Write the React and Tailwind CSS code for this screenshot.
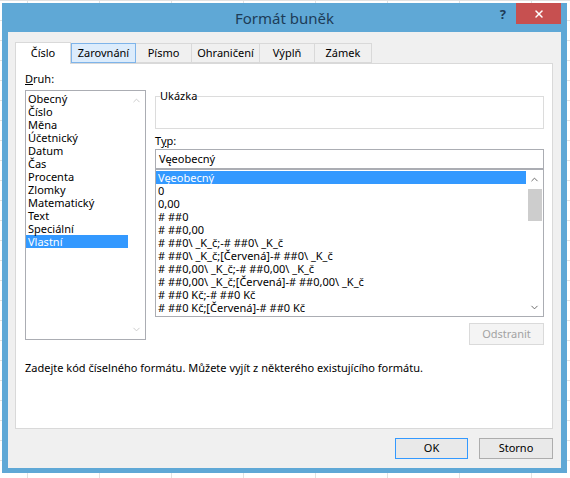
import { ChevronUp, ChevronDown, X } from "lucide-react";

const druhy = [
  "Obecný",
  "Číslo",
  "Měna",
  "Účetnický",
  "Datum",
  "Čas",
  "Procenta",
  "Zlomky",
  "Matematický",
  "Text",
  "Speciální",
  "Vlastní",
];

const typy = [
  "Vęeobecný",
  "0",
  "0,00",
  "# ##0",
  "# ##0,00",
  "# ##0\\ _K_č;-# ##0\\ _K_č",
  "# ##0\\ _K_č;[Červená]-# ##0\\ _K_č",
  "# ##0,00\\ _K_č;-# ##0,00\\ _K_č",
  "# ##0,00\\ _K_č;[Červená]-# ##0,00\\ _K_č",
  "# ##0 Kč;-# ##0 Kč",
  "# ##0 Kč;[Červená]-# ##0 Kč",
];

const tabs = [
  { label: "Zarovnání", w: "w-[65px]", hover: true },
  { label: "Písmo", w: "w-[56px]" },
  { label: "Ohraničení", w: "w-[68px]" },
  { label: "Výplň", w: "w-[55px]" },
  { label: "Zámek", w: "w-[57px]" },
];

export default function App() {
  return (
    <div
      className="w-[570px] h-[478px] overflow-hidden bg-white pt-[3px] pl-[2px] bg-[linear-gradient(to_right,#e2e2e2_1px,transparent_1px),linear-gradient(to_bottom,#e2e2e2_1px,transparent_1px)] bg-[length:72px_20px] bg-[position:27px_0px]"
      style={{ fontFamily: '"Noto Sans", "Open Sans", sans-serif' }}
    >
      <div className="w-[565px] h-[470px] bg-[#5fa8d6] flex flex-col px-[6px] pb-[5px]">
        {/* title bar */}
        <div className="h-[29px] relative flex items-center justify-center">
          <span className="text-[15px] text-[#1d3c58] pt-[2px]">Formát buněk</span>
          <div className="absolute top-0 right-0 flex items-start">
            <span className="text-[13px] font-bold text-[#1d3c58] mr-[10px] mt-[2px]">?</span>
            <div className="w-[45px] h-[21px] bg-[#c75050] flex items-center justify-center">
              <X size={12} strokeWidth={3} color="#ffffff" />
            </div>
          </div>
        </div>

        {/* client */}
        <div className="flex-1 bg-[#f0f0f0] pt-[9px] px-[7px] text-[11px] text-black">
          <div className="flex items-end h-[22px]">
            <div className="relative z-10 w-[56px] h-[22px] -mb-[1px] bg-white border border-b-0 border-[#d9d9d9] flex items-center justify-center">
              Číslo
            </div>
            {tabs.map((t) => (
              <div
                key={t.label}
                className={
                  t.hover
                    ? `${t.w} h-[20px] border border-[#7eb4ea] bg-[#dcecfc] flex items-center justify-center`
                    : `${t.w} h-[20px] border border-l-0 border-[#d9d9d9] bg-[#f0f0f0] flex items-center justify-center`
                }
              >
                {t.label}
              </div>
            ))}
          </div>

          {/* panel */}
          <div className="w-[538px] h-[366px] border border-[#d9d9d9] bg-white pt-[8px] pl-[9px]">
            <div className="flex">
              <div className="w-[121px]">
                <div className="h-[18px] leading-[14px]">
                  <span className="underline">D</span>ruh:
                </div>
                <div className="h-[250px] border border-[#abadb3] flex">
                  <div className="flex-1 pt-[1px]">
                    {druhy.map((d, i) => (
                      <div
                        key={d}
                        className={
                          i === druhy.length - 1
                            ? "h-[13px] leading-[13px] pl-[2px] bg-[#3399ff] text-white"
                            : "h-[13px] leading-[13px] pl-[2px]"
                        }
                      >
                        {d}
                      </div>
                    ))}
                  </div>
                  <div className="w-[17px] flex flex-col justify-between items-center py-[4px]">
                    <ChevronUp size={11} strokeWidth={2} color="#c8c8c8" />
                    <ChevronDown size={11} strokeWidth={2} color="#c8c8c8" />
                  </div>
                </div>
              </div>

              <div className="w-[389px] ml-[9px] flex flex-col">
                <div className="relative mt-[24px] h-[33px] border border-[#dcdcdc]">
                  <span className="absolute -top-[8px] left-[4px] bg-white leading-[14px]">Ukázka</span>
                </div>
                <div className="mt-[5px] h-[15px] leading-[14px]">
                  T<span className="underline">y</span>p:
                </div>
                <div className="h-[20px] border border-[#abadb3] pl-[3px] leading-[18px]">Vęeobecný</div>
                <div className="h-[148px] border border-[#abadb3] flex">
                  <div className="flex-1 pt-[1px]">
                    {typy.map((t, i) => (
                      <div
                        key={t}
                        className={
                          i === 0
                            ? "h-[13px] leading-[13px] pl-[2px] bg-[#3399ff] text-white whitespace-pre"
                            : "h-[13px] leading-[13px] pl-[2px] whitespace-pre"
                        }
                      >
                        {t}
                      </div>
                    ))}
                  </div>
                  <div className="w-[17px] flex flex-col items-center pt-[4px] pb-[3px]">
                    <ChevronUp size={11} strokeWidth={2} color="#606060" />
                    <div className="w-[14px] h-[32px] bg-[#cdcdcd] mt-[4px]" />
                    <div className="flex-1" />
                    <ChevronDown size={11} strokeWidth={2} color="#606060" />
                  </div>
                </div>
                <div className="self-end mt-[6px] w-[75px] h-[22px] border border-[#dadada] bg-[#f4f4f4] text-[#a3a3a3] flex items-center justify-center">
                  Odstranit
                </div>
              </div>
            </div>
            <div className="mt-[15px]">
              Zadejte kód číselného formátu. Můžete vyjít z některého existujícího formátu.
            </div>
          </div>

          {/* buttons */}
          <div className="flex justify-end gap-[11px] mt-[9px] w-[538px]">
            <div className="w-[73px] h-[21px] border border-[#3399ff] bg-[#e9e9e9] flex items-center justify-center">
              OK
            </div>
            <div className="w-[74px] h-[21px] border border-[#adadad] bg-[#e9e9e9] flex items-center justify-center">
              Storno
            </div>
          </div>
        </div>
      </div>
    </div>
  );
}
